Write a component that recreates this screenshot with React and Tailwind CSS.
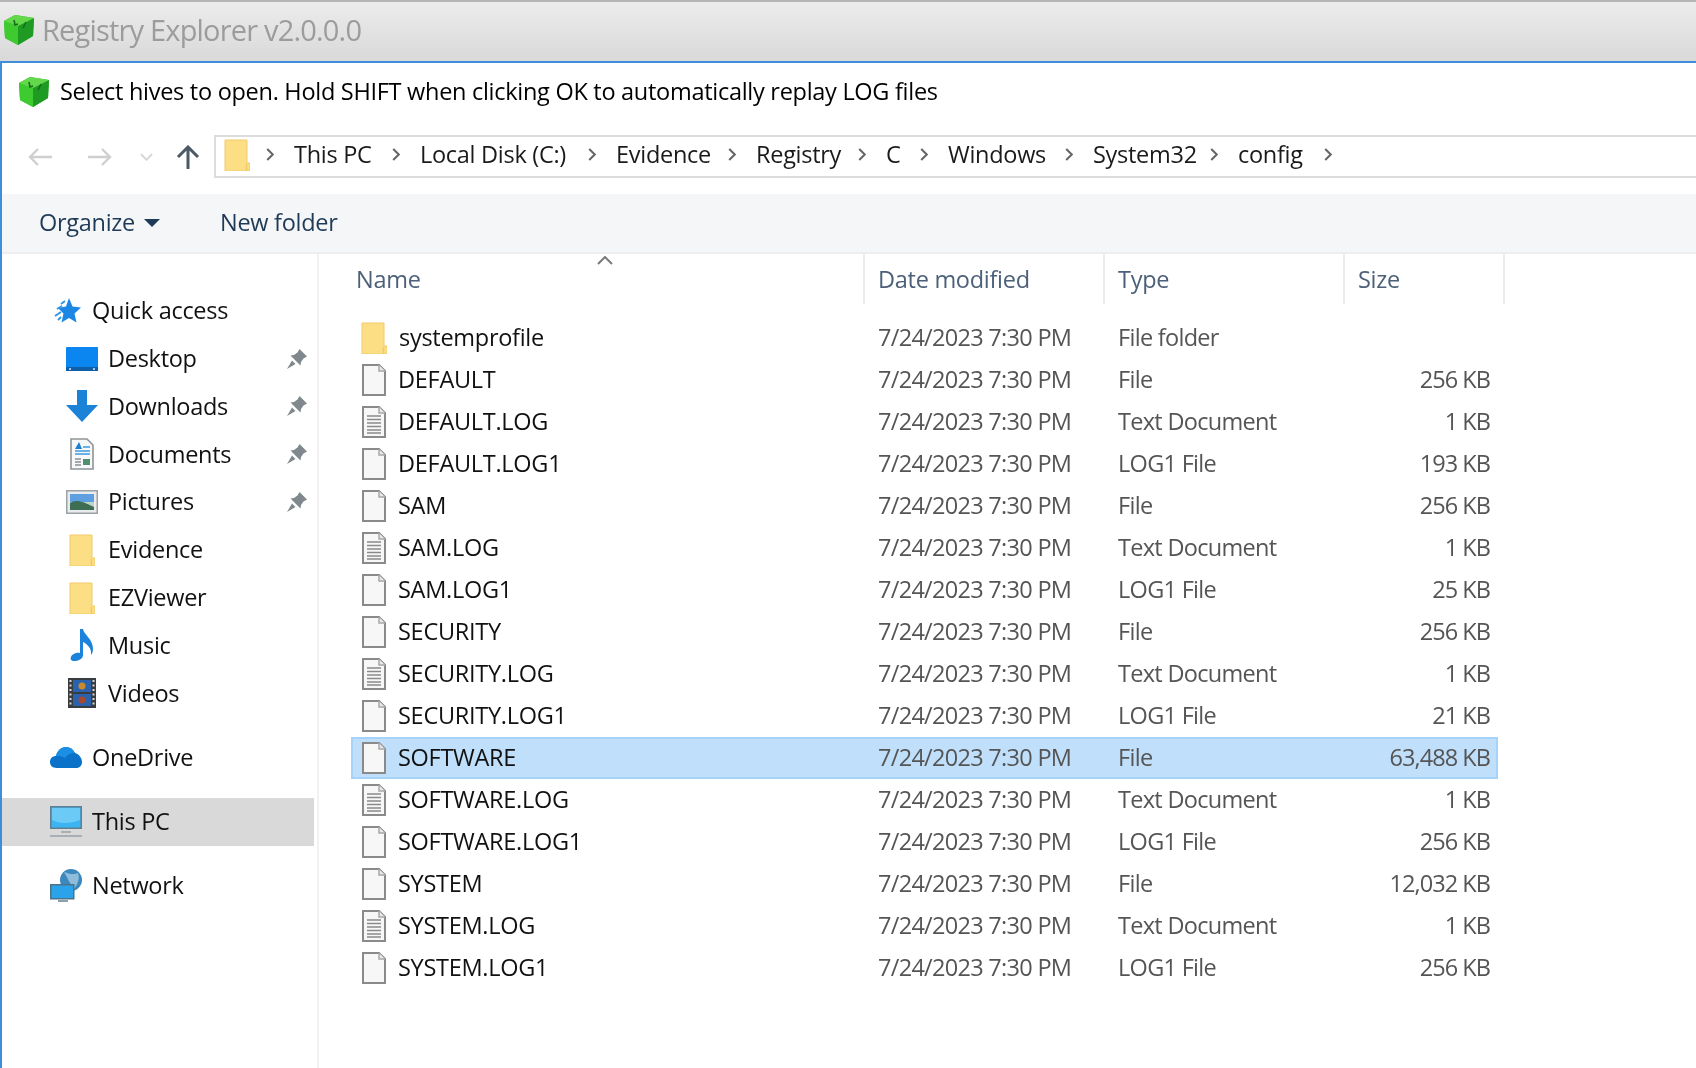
import React from "react";

const crumbs = [
  { label: "This PC", cls: "w-[126px]" },
  { label: "Local Disk (C:)", cls: "w-[196px]" },
  { label: "Evidence", cls: "w-[140px]" },
  { label: "Registry", cls: "w-[130px]" },
  { label: "C", cls: "w-[62px]" },
  { label: "Windows", cls: "w-[145px]" },
  { label: "System32", cls: "w-[145px]" },
  { label: "config", cls: "w-[114px]" },
];

const files = [
  { name: "systemprofile", type: "File folder", size: "", icon: "folder" },
  { name: "DEFAULT", type: "File", size: "256 KB", icon: "file" },
  { name: "DEFAULT.LOG", type: "Text Document", size: "1 KB", icon: "text" },
  { name: "DEFAULT.LOG1", type: "LOG1 File", size: "193 KB", icon: "file" },
  { name: "SAM", type: "File", size: "256 KB", icon: "file" },
  { name: "SAM.LOG", type: "Text Document", size: "1 KB", icon: "text" },
  { name: "SAM.LOG1", type: "LOG1 File", size: "25 KB", icon: "file" },
  { name: "SECURITY", type: "File", size: "256 KB", icon: "file" },
  { name: "SECURITY.LOG", type: "Text Document", size: "1 KB", icon: "text" },
  { name: "SECURITY.LOG1", type: "LOG1 File", size: "21 KB", icon: "file" },
  { name: "SOFTWARE", type: "File", size: "63,488 KB", icon: "file", selected: true },
  { name: "SOFTWARE.LOG", type: "Text Document", size: "1 KB", icon: "text" },
  { name: "SOFTWARE.LOG1", type: "LOG1 File", size: "256 KB", icon: "file" },
  { name: "SYSTEM", type: "File", size: "12,032 KB", icon: "file" },
  { name: "SYSTEM.LOG", type: "Text Document", size: "1 KB", icon: "text" },
  { name: "SYSTEM.LOG1", type: "LOG1 File", size: "256 KB", icon: "file" },
];

function Cube({ className }) {
  return (
    <svg viewBox="0 0 32 32" className={className}>
      <path d="M1 7 L12 1 L31 4 L30 22 L15 31 L2 24 Z" fill="#2fb52a" />
      <path d="M1 7 L15 12 L15 31 L2 24 Z" fill="#3ecb30" />
      <path d="M15 12 L31 4 L30 22 L15 31 Z" fill="#1f9a22" />
      <path d="M1 7 L12 1 L31 4 L15 12 Z" fill="#62d84a" />
      <path d="M11 6 L12 11 L15 10 M23 8 L20 14" stroke="#176b1c" strokeWidth="1.6" fill="none" />
    </svg>
  );
}

function Folder({ className }) {
  return (
    <svg viewBox="0 0 26 32" className={className}>
      <path d="M1 1 H23 V24 H26 V32 H1 Z" fill="#fcdf85" stroke="#f0c96a" strokeWidth="1" />
      <path d="M22.5 25 V31.5" stroke="#efc668" strokeWidth="1.5" />
    </svg>
  );
}

function FileIcon({ lines, className }) {
  return (
    <svg viewBox="0 0 24 32" className={className}>
      <path d="M1 1 H17 L23 7 V31 H1 Z" fill="#f7f7f7" stroke="#8a8a8a" strokeWidth="2" />
      <path d="M17 1 V7 H23" fill="#e9e9e9" stroke="#a8a8a8" strokeWidth="1.5" />
      {lines && (
        <path d="M5 10 H19 M5 13.5 H19 M5 17 H19 M5 20.5 H19 M5 24 H19 M5 27 H19" stroke="#8a8a8a" strokeWidth="1.7" />
      )}
    </svg>
  );
}

function RowIcon({ kind }) {
  if (kind === "folder") return <Folder className="w-[26px] h-[32px]" />;
  return <FileIcon lines={kind === "text"} className="w-[24px] h-[32px] ml-px" />;
}

function Pin() {
  return (
    <svg viewBox="0 0 20 20" className="w-[20px] h-[20px]">
      <path d="M12.5 0 L20 7.5 L16.5 9.5 L14 13 L13.5 16.5 L3.5 6.5 L7 6 L10.5 3.5 Z" fill="#7f888c" />
      <path d="M5 11.5 L0 20 L8.5 15 Z" fill="#7f888c" />
    </svg>
  );
}

const navIcons = {
  quick: (
    <svg viewBox="0 0 32 28" className="w-[32px] h-[28px]">
      <path d="M19 1 L22.5 9.5 L31 10.5 L24.5 16.5 L26.5 25.5 L19 21 L11.5 25.5 L13.5 16.5 L8 11 L16 9.5 Z" fill="#1c86e4" />
      <path d="M15 4 L11 7 M12 9 L7 12 M11 15 L5 19 M11 20 L8 23" stroke="#2f97e8" strokeWidth="2" />
    </svg>
  ),
  desktop: (
    <svg viewBox="0 0 32 24" className="w-[32px] h-[24px]">
      <rect width="32" height="24" rx="1" fill="#0b86f0" />
      <rect x="0" y="20" width="32" height="4" fill="#0f5fa8" />
      <path d="M3 22 H5 M27 22 H29" stroke="#d6ecff" strokeWidth="1.5" />
    </svg>
  ),
  downloads: (
    <svg viewBox="0 0 32 32" className="w-[32px] h-[32px]">
      <path d="M11 0 H21 V15 H32 L16 32 L0 15 H11 Z" fill="#1a83d8" />
    </svg>
  ),
  documents: (
    <svg viewBox="0 0 24 32" className="w-[24px] h-[32px]">
      <path d="M1 1 H17 L23 7 V31 H1 Z" fill="#f6f8f9" stroke="#8f9496" strokeWidth="1.6" />
      <path d="M9 4 L12 11 H5 Z" fill="#1d7fd1" />
      <path d="M13 9 H20 M5 13 H20 M5 16 H20" stroke="#3c9bdf" strokeWidth="1.6" />
      <path d="M5 21 H11 M5 24 H11 M5 27 H11" stroke="#8a8f92" strokeWidth="1.4" />
      <rect x="13" y="21" width="7" height="6" fill="#4f8f6c" />
    </svg>
  ),
  pictures: (
    <svg viewBox="0 0 32 24" className="w-[32px] h-[24px]">
      <rect x="0.75" y="0.75" width="30.5" height="22.5" fill="#e9ecee" stroke="#9ba1a4" strokeWidth="1.5" />
      <rect x="4" y="4" width="24" height="8" fill="#5d9fe0" />
      <rect x="4" y="12" width="24" height="8" fill="#bcd4c6" />
      <path d="M4 13 C10 9 16 11 28 17 V20 H4 Z" fill="#3d6d52" />
    </svg>
  ),
  folder: <Folder className="w-[26px] h-[32px]" />,
  music: (
    <svg viewBox="0 0 24 32" className="w-[24px] h-[32px]">
      <path d="M10 0 H13 C14 6 23 10 23 20 C23 23 22 25 21 26 C22 19 17 15 13 13 V26 C13 30 8 32 4 32 C1 32 0 30 1 28 C2 25 7 23 10 24 Z" fill="#1b83dc" />
    </svg>
  ),
  videos: (
    <svg viewBox="0 0 28 30" className="w-[28px] h-[30px]">
      <rect width="28" height="30" fill="#3a3d40" />
      <rect x="5" y="2" width="18" height="12" fill="#2b62ad" />
      <rect x="5" y="16" width="18" height="12" fill="#2b62ad" />
      <circle cx="14" cy="8" r="3.5" fill="#c98a2e" />
      <circle cx="14" cy="22" r="3.5" fill="#a9482c" />
      <path d="M2.5 2 V28 M25.5 2 V28" stroke="#d8d8d8" strokeWidth="2" strokeDasharray="2 2.5" />
    </svg>
  ),
  onedrive: (
    <svg viewBox="0 0 32 22" className="w-[32px] h-[22px]">
      <path d="M7 21 C2 21 0 18 0 15 C0 11 3 9 6 9 C7 4 11 0 16 0 C20 0 23 2 25 6 C29 7 32 11 32 15 C32 19 29 21 26 21 Z" fill="#0a72c9" />
      <path d="M6 9 C7 4 11 0 16 0 C20 0 23 2 25 6 C20 6 17 8 15 11 C12 9 9 9 6 9 Z" fill="#1a8fe3" />
    </svg>
  ),
  pc: (
    <svg viewBox="0 0 32 32" className="w-[32px] h-[32px]">
      <rect x="0.75" y="0.75" width="30.5" height="21.5" fill="#3cb4f2" stroke="#5f7f92" strokeWidth="1.5" />
      <path d="M2 2 H30 V14 C20 18 10 18 2 14 Z" fill="#6ccbf6" />
      <rect x="11" y="25" width="10" height="2" fill="#a8b0b5" />
      <rect x="0" y="29" width="32" height="2" fill="#a8b0b5" />
    </svg>
  ),
  network: (
    <svg viewBox="0 0 32 34" className="w-[32px] h-[34px]">
      <circle cx="21" cy="11" r="11" fill="#3d87bf" />
      <path d="M14 3 C19 5 24 6 28 4 C30 9 28 15 24 20 C20 15 17 8 14 3 Z" fill="#8fbcd8" />
      <rect x="0.75" y="15.75" width="23" height="14" fill="#2aa3ea" stroke="#4c7488" strokeWidth="1.5" />
      <rect x="8" y="31" width="10" height="2" fill="#8ea0aa" />
    </svg>
  ),
};

function NavItem({ icon, label, indent, pinned, active, cls }) {
  return (
    <div
      className={`flex items-center h-[47.8px] ${indent ? "pl-[64px]" : "pl-[48px]"} pr-[7px] ${active ? "bg-[#d9d9d9]" : ""} ${cls || ""}`}
    >
      <div className="w-[32px] flex justify-center shrink-0">{navIcons[icon]}</div>
      <span className="ml-[10px] text-[#111]">{label}</span>
      {pinned && (
        <div className="ml-auto">
          <Pin />
        </div>
      )}
    </div>
  );
}

function Chevron() {
  return (
    <svg viewBox="0 0 8 14" className="w-[8px] h-[13px] shrink-0 text-[#666]" fill="none" stroke="currentColor" strokeWidth="2.2">
      <path d="M1 1 L7 7 L1 13" />
    </svg>
  );
}

export default function App() {
  return (
    <div className="w-[1696px] h-[1068px] overflow-hidden bg-white flex flex-col text-[23.5px] leading-none blur-[0.5px] font-['Open_Sans',sans-serif] tracking-[-0.012em]">
      {/* title bar */}
      <div className="h-[61px] shrink-0 border-t-2 border-[#b5b5b5] bg-gradient-to-b from-[#ececec] to-[#d9d9d9] flex items-center pl-[3px] pb-[4px]">
        <Cube className="w-[32px] h-[32px]" />
        <span className="ml-[7px] text-[29px] tracking-[-0.028em] text-[#9c9c9c]">Registry Explorer v2.0.0.0</span>
      </div>

      <div className="flex-1 flex flex-col min-h-0 border-t-2 border-l-2 border-[#3d8fdb]">
        {/* message */}
        <div className="h-[61px] shrink-0 flex items-center pl-[16px] pb-[4px]">
          <Cube className="w-[32px] h-[32px]" />
          <span className="ml-[10px] text-[#000]">
            Select hives to open. Hold SHIFT when clicking OK to automatically replay LOG files
          </span>
        </div>

        {/* navigation row */}
        <div className="h-[70px] shrink-0 flex items-start pt-[11px]">
          <div className="w-[212px] h-[43px] shrink-0 flex items-center pl-[26px]">
            <svg viewBox="0 0 24 20" className="w-[24px] h-[20px] text-[#cfcfcf]" fill="none" stroke="currentColor" strokeWidth="2.4">
              <path d="M24 10 H2 M10 2 L2 10 L10 18" />
            </svg>
            <svg viewBox="0 0 24 20" className="w-[24px] h-[20px] ml-[36px] text-[#cfcfcf]" fill="none" stroke="currentColor" strokeWidth="2.4">
              <path d="M0 10 H22 M14 2 L22 10 L14 18" />
            </svg>
            <svg viewBox="0 0 14 8" className="w-[13px] h-[8px] ml-[28px] text-[#d4d4d4]" fill="none" stroke="currentColor" strokeWidth="2">
              <path d="M1 1 L7 7 L13 1" />
            </svg>
            <svg viewBox="0 0 24 24" className="w-[24px] h-[24px] ml-[23px] text-[#4d5a66]" fill="none" stroke="currentColor" strokeWidth="3">
              <path d="M12 24 V2 M2 12 L12 2 L22 12" />
            </svg>
          </div>
          <div className="flex-1 h-[43px] border-y-2 border-l-2 border-[#dcdcdc] flex items-center pl-[8px] pb-[4px] text-[#1a1a1a]">
            <Folder className="w-[26px] h-[32px] shrink-0 mt-[1px] mr-[16px]" />
            {crumbs.map((c) => (
              <div key={c.label} className={`flex items-center shrink-0 ${c.cls}`}>
                <Chevron />
                <span className="ml-[20px]">{c.label}</span>
              </div>
            ))}
            <Chevron />
          </div>
        </div>

        {/* toolbar */}
        <div className="h-[60px] shrink-0 bg-[#f5f6f7] border-b-2 border-[#eeeeee] flex items-center pl-[37px] text-[#1f3a57]">
          <span>Organize</span>
          <svg viewBox="0 0 16 8" className="w-[16px] h-[8px] ml-[9px] text-[#1f3a57]" fill="currentColor">
            <path d="M0 0 H16 L8 8 Z" />
          </svg>
          <span className="ml-[60px]">New folder</span>
        </div>

        {/* body */}
        <div className="flex-1 flex min-h-0">
          <div className="w-[317px] shrink-0 border-r-2 border-[#f2f2f2] pt-[33px]">
            <div className="w-[312px]">
              <NavItem icon="quick" label="Quick access" />
              <NavItem icon="desktop" label="Desktop" indent pinned />
              <NavItem icon="downloads" label="Downloads" indent pinned />
              <NavItem icon="documents" label="Documents" indent pinned />
              <NavItem icon="pictures" label="Pictures" indent pinned />
              <NavItem icon="folder" label="Evidence" indent />
              <NavItem icon="folder" label="EZViewer" indent />
              <NavItem icon="music" label="Music" indent />
              <NavItem icon="videos" label="Videos" indent />
              <NavItem icon="onedrive" label="OneDrive" cls="mt-[17px]" />
              <NavItem icon="pc" label="This PC" active cls="mt-[16px]" />
              <NavItem icon="network" label="Network" cls="mt-[16px]" />
            </div>
          </div>

          <div className="flex-1 min-w-0">
            {/* column headers */}
            <div className="relative h-[50px] grid grid-cols-[546px_240px_240px_160px] text-[#4c6079]">
              <div className="border-r-2 border-[#ececec] pl-[37px] pt-[2px] flex items-center">Name</div>
              <div className="border-r-2 border-[#ececec] pl-[13px] pt-[2px] flex items-center">Date modified</div>
              <div className="border-r-2 border-[#ececec] pl-[13px] pt-[2px] flex items-center">Type</div>
              <div className="border-r-2 border-[#ececec] pl-[13px] pt-[2px] flex items-center">Size</div>
              <svg viewBox="0 0 16 9" className="absolute left-[278px] top-[2px] w-[16px] h-[9px] text-[#7a7a7a]" fill="none" stroke="currentColor" strokeWidth="2">
                <path d="M1 8 L8 1 L15 8" />
              </svg>
            </div>

            {/* rows */}
            <div className="mt-[13px] ml-[32px] w-[1147px]">
              {files.map((f) => (
                <div
                  key={f.name}
                  className={`h-[42px] grid grid-cols-[514px_240px_240px_153px] items-center border-2 ${f.selected ? "bg-[#bfdffb] border-[#a5d3fa]" : "border-transparent"}`}
                >
                  <div className="flex items-center pl-[8px] text-[#111]">
                    <RowIcon kind={f.icon} />
                    <span className="ml-[12px]">{f.name}</span>
                  </div>
                  <div className="pl-[11px] text-[#555] tracking-[-0.03em]">7/24/2023 7:30 PM</div>
                  <div className="pl-[11px] text-[#555] tracking-[-0.03em]">{f.type}</div>
                  <div className="pr-[10px] text-right text-[#555] tracking-[-0.04em]">{f.size}</div>
                </div>
              ))}
            </div>
          </div>
        </div>
      </div>
    </div>
  );
}
